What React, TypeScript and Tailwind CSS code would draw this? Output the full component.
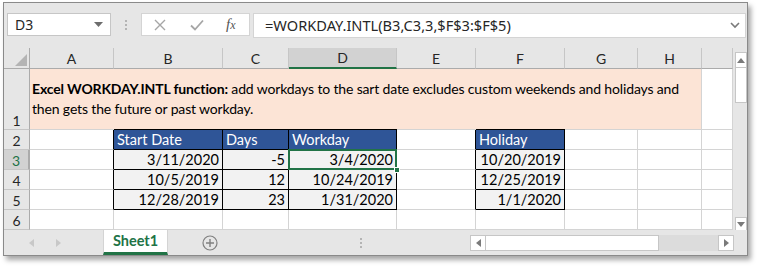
import React from "react";

const cal = "font-['Lato','Liberation_Sans',sans-serif]";
const seg = "font-['Noto_Sans','Open_Sans',sans-serif]";

const gridCell = "box-border border-r border-b border-r-[#d4d4d4] border-b-[#d4d4d4]";

function RowHead({ n, sel }: { n: number; sel?: boolean }) {
  return (
    <div
      className={`box-border border-r border-b border-r-[#ababab] border-b-[#c6c6c6] flex items-end justify-center pb-[1px] text-[14px] leading-none ${cal} ${
        sel ? "bg-[#d2d2d2] text-[#217346] border-r-2 border-r-[#217346]" : "bg-[#e6e6e6] text-[#262626]"
      }`}
    >
      {n}
    </div>
  );
}

function Empty({ cls = "" }: { cls?: string }) {
  return <div className={`${gridCell} bg-white ${cls}`} />;
}

function Head({ t }: { t: string }) {
  return (
    <div
      className={`box-border border-b border-b-black border-r border-r-black bg-[#2f5597] text-white text-[14.5px] ${cal} flex items-center pl-[3px] pt-[1px] shadow-[0_-1px_0_#000]`}
    >
      {t}
    </div>
  );
}

function Data({ t }: { t: string }) {
  return (
    <div
      className={`box-border border-r border-r-black border-b border-b-black bg-[#f2f2f2] text-black text-[14.5px] ${cal} flex items-center justify-end pr-[3px] pt-[1px]`}
    >
      {t}
    </div>
  );
}

export default function App() {
  return (
    <div className="w-[757px] h-[266px] bg-white pt-[2px] pl-[3px] overflow-hidden">
      <div className="box-border w-[745px] h-[254px] border border-[#8a8a8a] bg-[#e6e6e6] shadow-[3px_4px_5px_rgba(0,0,0,0.35)] flex flex-col">
        {/* formula bar */}
        <div className="h-[45px] flex items-start pt-[10px] pl-[3px] shrink-0">
          <div className={`box-border w-[104px] h-[23px] bg-white border border-[#c6c6c6] flex items-center justify-between pl-[7px] pr-[7px] ${seg} text-[14px] text-[#262626]`}>
            <span>D3</span>
            <svg width="9" height="6" viewBox="0 0 9 6"><path d="M0 0h9L4.5 5z" fill="#6d6d6d" /></svg>
          </div>
          <div className="w-[30px] h-[23px] flex flex-col items-center justify-center gap-[2px]">
            <div className="w-[2px] h-[2px] bg-[#b4b4b4]" />
            <div className="w-[2px] h-[2px] bg-[#b4b4b4]" />
            <div className="w-[2px] h-[2px] bg-[#b4b4b4]" />
          </div>
          <div className="box-border w-[109px] h-[23px] bg-white border border-[#d4d4d4] flex items-center">
            <svg className="ml-[12px]" width="12" height="12" viewBox="0 0 12 12"><path d="M1 1l10 10M11 1L1 11" stroke="#a6a6a6" strokeWidth="1.4" /></svg>
            <svg className="ml-[24px]" width="14" height="12" viewBox="0 0 14 12"><path d="M1 6.5l4 4L13 1.5" stroke="#a6a6a6" strokeWidth="1.8" fill="none" /></svg>
            <span className="ml-[22px] font-['Liberation_Serif',serif] italic text-[15px] text-[#555] leading-none">
              f<span className="text-[12px]">x</span>
            </span>
          </div>
          <div className="w-[3px]" />
          <div className={`box-border w-[493px] h-[25px] bg-white border border-[#d4d4d4] flex items-center justify-between pl-[11px] pr-[5px] ${seg} text-[14.6px] text-[#262626]`}>
            <span>=WORKDAY.INTL(B3,C3,3,$F$3:$F$5)</span>
            <svg width="10" height="7" viewBox="0 0 10 7"><path d="M1 1l4 4 4-4" stroke="#7a7a7a" strokeWidth="1.6" fill="none" /></svg>
          </div>
        </div>

        {/* sheet area */}
        <div className="flex shrink-0">
          <div className="grid grid-cols-[26px_84px_109px_66px_108px_79px_89px_73px_64px_31px] grid-rows-[21px_61px_20px_20px_20px_20px_20px] bg-white">
            {/* header row */}
            <div className="box-border border-r border-b border-r-[#ababab] border-b-[#ababab] bg-[#e6e6e6] flex items-end justify-end p-[2px]">
              <svg width="12" height="12" viewBox="0 0 12 12"><path d="M12 0v12H0z" fill="#b4b4b4" /></svg>
            </div>
            {["A", "B", "C", "D", "E", "F", "G", "H", ""].map((c) => (
              <div
                key={c || "i"}
                className={`box-border border-r border-r-[#c6c6c6] ${
                  c === "D" ? "border-b-2 border-b-[#217346] bg-[#d2d2d2]" : "border-b border-b-[#ababab] bg-[#e6e6e6]"
                } flex items-center justify-center text-[14px] text-[#262626] ${cal}`}
              >
                {c}
              </div>
            ))}

            {/* row 1 */}
            <RowHead n={1} />
            <div className={`col-span-8 box-border border-r border-b border-r-[#d4d4d4] border-b-[#d4d4d4] bg-[#fce4d6] flex items-center pl-[2px] text-[14px] tracking-[-0.15px] leading-[20px] text-black whitespace-nowrap ${cal}`}>
              <div>
                <b>Excel WORKDAY.INTL function:</b> add workdays to the sart date excludes custom weekends and holidays and
                <br />
                then gets the future or past workday.
              </div>
            </div>
            <Empty />

            {/* row 2 */}
            <RowHead n={2} />
            <Empty cls="!border-r-black" />
            <Head t="Start Date" />
            <Head t="Days" />
            <Head t="Workday" />
            <Empty cls="!border-r-black" />
            <Head t="Holiday" />
            <Empty />
            <Empty />
            <Empty />

            {/* rows 3-5 */}
            {[
              ["3/11/2020", "-5", "3/4/2020", "10/20/2019"],
              ["10/5/2019", "12", "10/24/2019", "12/25/2019"],
              ["12/28/2019", "23", "1/31/2020", "1/1/2020"],
            ].map((r, i) => (
              <React.Fragment key={i}>
                <RowHead n={i + 3} sel={i === 0} />
                <Empty cls="!border-r-black" />
                <Data t={r[0]} />
                <Data t={r[1]} />
                {i === 0 ? (
                  <div className={`relative box-border border-r border-r-black border-b border-b-black bg-[#f2f2f2] text-black text-[14.5px] ${cal} flex items-center justify-end pr-[3px] pt-[1px]`}>
                    {r[2]}
                    <div className="absolute left-[-1px] top-[-1px] right-[-1px] bottom-[-1px] border-2 border-[#217346]" />
                    <div className="absolute right-[-4px] bottom-[-4px] w-[6px] h-[6px] bg-[#217346] border border-white" />
                  </div>
                ) : (
                  <Data t={r[2]} />
                )}
                <Empty cls="!border-r-black" />
                <Data t={r[3]} />
                <Empty />
                <Empty />
                <Empty />
              </React.Fragment>
            ))}

            {/* row 6 */}
            <RowHead n={6} />
            {Array.from({ length: 9 }).map((_, i) => (
              <Empty key={i} />
            ))}
          </div>

          {/* vertical scrollbar */}
          <div className="w-[14px] h-[182px] bg-[#e6e6e6] flex flex-col items-end pt-[4px]">
            <div className="box-border w-[12px] h-[16px] bg-white border border-[#c6c6c6] flex items-center justify-center">
              <svg width="8" height="5" viewBox="0 0 8 5"><path d="M0 5h8L4 0z" fill="#7a7a7a" /></svg>
            </div>
            <div className="box-border w-[12px] h-[35px] bg-white border border-[#c6c6c6] border-t-0" />
            <div className="flex-1" />
            <div className="box-border w-[12px] h-[14px] bg-white border border-[#c6c6c6] flex items-center justify-center mb-[-1px]">
              <svg width="8" height="5" viewBox="0 0 8 5"><path d="M0 0h8L4 5z" fill="#7a7a7a" /></svg>
            </div>
          </div>
        </div>

        {/* tab bar */}
        <div className="flex-1 flex items-stretch bg-[#e6e6e6]">
          <div className="w-[99px] flex items-center pl-[25px] gap-[22px]">
            <svg width="5" height="8" viewBox="0 0 5 8"><path d="M5 0v8L0 4z" fill="#c8c8c8" /></svg>
            <svg width="5" height="8" viewBox="0 0 5 8"><path d="M0 0v8L5 4z" fill="#c8c8c8" /></svg>
          </div>
          <div className={`box-border w-[65px] bg-white border-x border-[#d4d4d4] border-b-[3px] border-b-[#217346] flex items-center justify-center font-bold text-[#217346] text-[14.5px] ${cal}`}>
            Sheet1
          </div>
          <div className="w-[84px] flex items-center justify-center">
            <svg width="16" height="16" viewBox="0 0 16 16">
              <circle cx="8" cy="8" r="7" fill="none" stroke="#808080" strokeWidth="1.2" />
              <path d="M8 4v8M4 8h8" stroke="#808080" strokeWidth="1.4" />
            </svg>
          </div>
          <div className="w-[218px] flex flex-col items-center justify-center gap-[2px]">
            <div className="w-[2px] h-[2px] bg-[#b4b4b4]" />
            <div className="w-[2px] h-[2px] bg-[#b4b4b4]" />
            <div className="w-[2px] h-[2px] bg-[#b4b4b4]" />
          </div>
          <div className="flex items-center">
            <div className="box-border w-[16px] h-[16px] bg-white border border-[#c6c6c6] flex items-center justify-center">
              <svg width="5" height="8" viewBox="0 0 5 8"><path d="M5 0v8L0 4z" fill="#7a7a7a" /></svg>
            </div>
            <div className="box-border w-[173px] h-[16px] bg-white border border-[#c6c6c6] border-l-0" />
            <div className="w-[59px] h-[16px] bg-[#dcdcdc]" />
            <div className="box-border w-[16px] h-[16px] bg-white border border-[#c6c6c6] flex items-center justify-center">
              <svg width="5" height="8" viewBox="0 0 5 8"><path d="M0 0v8L5 4z" fill="#7a7a7a" /></svg>
            </div>
          </div>
        </div>
      </div>
    </div>
  );
}
